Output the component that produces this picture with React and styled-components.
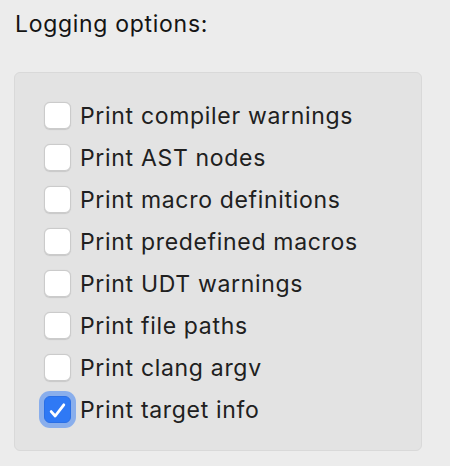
import React from "react";
import styled, { createGlobalStyle } from "styled-components";

const Global = createGlobalStyle`
  html, body { margin: 0; padding: 0; background: #ececec; }
  body { font-family: Inter, "Noto Sans", "Liberation Sans", sans-serif; }
`;

const Page = styled.div`
  width: 450px;
  height: 466px;
  padding-top: 10px;
  box-sizing: border-box;
`;

const Title = styled.div`
  margin-left: 15px;
  font-size: 23px;
  line-height: 28px;
  letter-spacing: 0.7px;
  color: #141414;
`;

const Group = styled.div`
  margin: 34px 0 0 14px;
  width: 408px;
  box-sizing: border-box;
  background: #e3e3e3;
  border: 1px solid #d9d9d9;
  border-radius: 6px;
  padding: 29px 0 27px 29px;
  display: flex;
  flex-direction: column;
  gap: 15px;
`;

const Row = styled.label`
  display: flex;
  align-items: center;
  gap: 9px;
  height: 27px;
  font-size: 23px;
  letter-spacing: 0.68px;
  color: #202020;
`;

const Box = styled.span`
  position: relative;
  flex: none;
  width: 27px;
  height: 27px;
  box-sizing: border-box;
  border-radius: 6px;
  background: ${(p) => (p.$checked ? "#2f79f5" : "#ffffff")};
  border: 1px solid ${(p) => (p.$checked ? "#2a6fe6" : "#cbcbcb")};
  box-shadow: ${(p) =>
    p.$checked
      ? "0 0 0 5px rgba(47,121,245,0.5)"
      : "0 0.5px 1px rgba(0,0,0,0.12)"};
  display: flex;
  align-items: center;
  justify-content: center;
`;

const Check = () => (
  <svg width="27" height="27" viewBox="0 0 27 27" style={{ position: "absolute", left: -1, top: -1 }}>
    <path
      d="M7.2 15.6 L11.2 20 L19.8 8.8"
      fill="none"
      stroke="#fff"
      strokeWidth="2.8"
      strokeLinecap="round"
      strokeLinejoin="round"
    />
  </svg>
);

const options = [
  ["Print compiler warnings", false],
  ["Print AST nodes", false],
  ["Print macro definitions", false],
  ["Print predefined macros", false],
  ["Print UDT warnings", false],
  ["Print file paths", false],
  ["Print clang argv", false],
  ["Print target info", true],
];

export default function App() {
  return (
    <>
      <Global />
      <Page>
        <Title>Logging options:</Title>
        <Group>
          {options.map(([label, checked]) => (
            <Row key={label}>
              <Box $checked={checked}>{checked && <Check />}</Box>
              {label}
            </Row>
          ))}
        </Group>
      </Page>
    </>
  );
}
